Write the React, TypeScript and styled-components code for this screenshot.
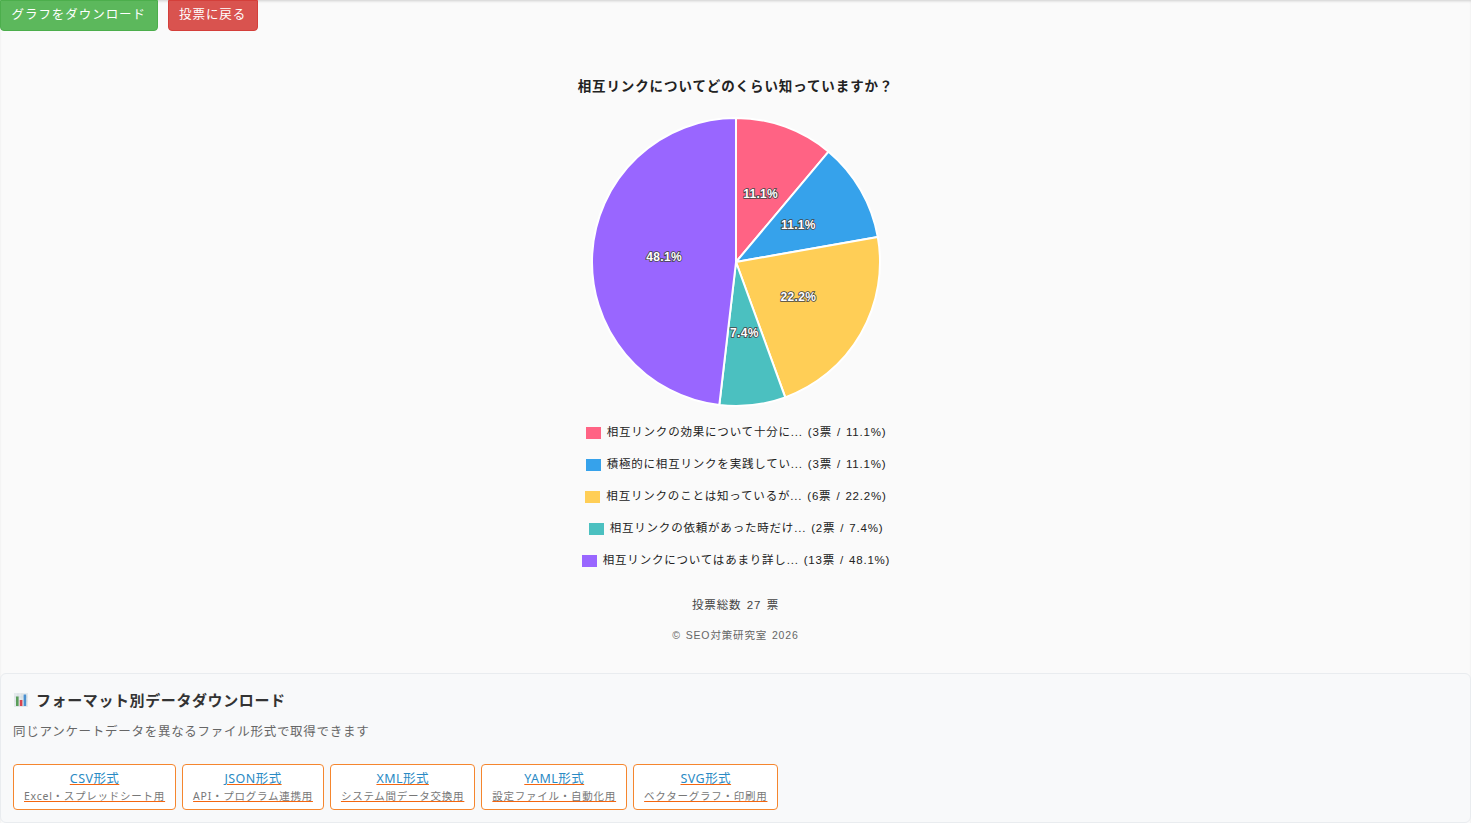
import React from "react";
import styled, { createGlobalStyle } from "styled-components";

const GlobalStyle = createGlobalStyle`
  html, body {
    margin: 0;
    padding: 0;
    background: #fafafa;
    font-family: "Liberation Sans", "Noto Sans CJK JP", sans-serif;
  }
`;

const slices = [
  { label: "相互リンクの効果について十分に...", votes: 3, pct: "11.1%", color: "#ff6384" },
  { label: "積極的に相互リンクを実践してい...", votes: 3, pct: "11.1%", color: "#36a2eb" },
  { label: "相互リンクのことは知っているが...", votes: 6, pct: "22.2%", color: "#ffce56" },
  { label: "相互リンクの依頼があった時だけ...", votes: 2, pct: "7.4%", color: "#4bc0c0" },
  { label: "相互リンクについてはあまり詳し...", votes: 13, pct: "48.1%", color: "#9966ff" },
];

const formats = [
  { name: "CSV形式", note: "Excel・スプレッドシート用" },
  { name: "JSON形式", note: "API・プログラム連携用" },
  { name: "XML形式", note: "システム間データ交換用" },
  { name: "YAML形式", note: "設定ファイル・自動化用" },
  { name: "SVG形式", note: "ベクターグラフ・印刷用" },
];

const Pie = () => {
  const c = 146;
  const r = 144;
  const total = 27;
  let acc = 0;
  const parts = slices.map((s) => {
    const a0 = (acc / total) * Math.PI * 2;
    acc += s.votes;
    const a1 = (acc / total) * Math.PI * 2;
    const mid = (a0 + a1) / 2;
    const large = a1 - a0 > Math.PI ? 1 : 0;
    const d = `M${c} ${c}L${c + r * Math.sin(a0)} ${c - r * Math.cos(a0)}A${r} ${r} 0 ${large} 1 ${c + r * Math.sin(a1)} ${c - r * Math.cos(a1)}Z`;
    return { ...s, d, x: c + 0.5 * r * Math.sin(mid), y: c - 0.5 * r * Math.cos(mid) };
  });
  return (
    <PieSvg width={292} height={292} viewBox="0 0 292 292">
      {parts.map((p) => (
        <path key={p.color} d={p.d} fill={p.color} stroke="#fff" strokeWidth={2} strokeLinejoin="round" />
      ))}
      {parts.map((p) => (
        <PieLabel key={p.color} x={p.x} y={p.y} textAnchor="middle" dominantBaseline="middle">
          {p.pct}
        </PieLabel>
      ))}
    </PieSvg>
  );
};

const ChartIcon = () => (
  <svg width="16" height="16" viewBox="0 0 16 16">
    <rect x="1" y="1" width="14" height="14" fill="#e4e9ec" />
    <path d="M1.5 5h13M1.5 9h13M5 1.5v13M9 1.5v13" stroke="#cfd8dc" strokeWidth="0.6" />
    <rect x="3" y="4.5" width="2.6" height="9.5" fill="#5a9e5a" />
    <rect x="6.8" y="8" width="2.6" height="6" fill="#d9434e" />
    <rect x="10.6" y="2.5" width="2.6" height="11.5" fill="#4a90d0" />
  </svg>
);

const App = () => (
  <>
    <GlobalStyle />
    <Page>
      <Actions>
        <ActionButton $bg="#5cb85c" $border="#4cae4c">グラフをダウンロード</ActionButton>
        <ActionButton $bg="#d9534f" $border="#d43f3a">投票に戻る</ActionButton>
      </Actions>
      <ChartArea>
        <ChartTitle>相互リンクについてどのくらい知っていますか？</ChartTitle>
        <Pie />
        <Legend>
          {slices.map((s) => (
            <LegendRow key={s.color}>
              <Swatch $color={s.color} />
              <LegendText>{s.label} ({s.votes}票 / {s.pct})</LegendText>
            </LegendRow>
          ))}
        </Legend>
        <Total>投票総数 27 票</Total>
        <Copy>© SEO対策研究室 2026</Copy>
      </ChartArea>
      <Panel>
        <PanelTitle><ChartIcon />フォーマット別データダウンロード</PanelTitle>
        <PanelText>同じアンケートデータを異なるファイル形式で取得できます</PanelText>
        <FormatRow>
          {formats.map((f) => (
            <FormatLink key={f.name} href="#">
              <FormatName>{f.name}</FormatName>
              <FormatNote>{f.note}</FormatNote>
            </FormatLink>
          ))}
        </FormatRow>
      </Panel>
    </Page>
  </>
);

export default App;

const Page = styled.div`
  min-height: 823px;
  box-shadow: inset 0 2px 3px -1px rgba(0, 0, 0, 0.18);
`;

const Actions = styled.div`
  display: flex;
  gap: 10px;
`;

const ActionButton = styled.button<{ $bg: string; $border: string }>`
  height: 31px;
  padding: 0 10.5px 4px;
  border: 1px solid ${({ $border }) => $border};
  border-radius: 0 0 4px 4px;
  background: ${({ $bg }) => $bg};
  color: #fff;
  font: 12.5px "Noto Sans", "Noto Sans CJK JP", sans-serif;
  letter-spacing: 0.95px;
`;

const ChartArea = styled.div`
  display: flex;
  flex-direction: column;
  align-items: center;
`;

const ChartTitle = styled.h2`
  margin: 46px 0 0;
  height: 20px;
  font: bold 13.5px/20px "Liberation Sans", "Noto Sans CJK JP", sans-serif;
  letter-spacing: 0.9px;
  color: #222;
`;

const PieSvg = styled.svg`
  display: block;
  margin-top: 19px;
`;

const PieLabel = styled.text`
  font: bold 12px "Liberation Sans", sans-serif;
  letter-spacing: 0.3px;
  fill: #fff;
  stroke: #444;
  stroke-width: 1.6px;
  paint-order: stroke;
`;

const Legend = styled.div`
  display: flex;
  flex-direction: column;
  align-items: center;
  margin-top: 8px;
  padding-left: 1px;
`;

const LegendRow = styled.div`
  display: flex;
  align-items: center;
  gap: 6px;
  height: 32px;
`;

const LegendText = styled.span`
  padding-bottom: 2px;
  font-size: 11.5px;
  letter-spacing: 0.8px;
  word-spacing: 1px;
  color: #222;
`;

const Swatch = styled.i<{ $color: string }>`
  display: block;
  width: 15px;
  height: 12px;
  margin-top: 2px;
  background: ${({ $color }) => $color};
`;

const Total = styled.div`
  margin-top: 20px;
  font-size: 11.5px;
  line-height: 18px;
  letter-spacing: 0.8px;
  word-spacing: 1.5px;
  color: #444;
`;

const Copy = styled.div`
  margin-top: 13px;
  font-size: 10.5px;
  line-height: 16px;
  letter-spacing: 0.85px;
  word-spacing: 1px;
  color: #666;
`;

const Panel = styled.section`
  box-sizing: border-box;
  height: 150px;
  margin-top: 30px;
  padding: 16px 12px 0;
  background: #f8f9fa;
  border: 1px solid #e9ecef;
  border-radius: 6px;
`;

const PanelTitle = styled.h3`
  display: flex;
  align-items: center;
  gap: 7px;
  margin: 0;
  font: bold 15px/20px "Noto Sans", "Noto Sans CJK JP", sans-serif;
  letter-spacing: 0.6px;
  color: #333;
`;

const PanelText = styled.p`
  margin: 12px 0 0;
  font: 12.5px/20px "Noto Sans", "Noto Sans CJK JP", sans-serif;
  letter-spacing: 0.72px;
  color: #666;
`;

const FormatRow = styled.div`
  display: flex;
  gap: 6px;
  margin-top: 22px;
`;

const FormatLink = styled.a`
  box-sizing: border-box;
  height: 46px;
  padding: 6px 10px;
  background: #fff;
  border: 1px solid #f5862e;
  border-radius: 4px;
  text-align: center;
  color: #f4660f;
  text-decoration: underline;
  font-family: "Noto Sans", "Noto Sans CJK JP", sans-serif;
`;

const FormatName = styled.span`
  display: block;
  font-size: 12.5px;
  line-height: 16.5px;
  letter-spacing: 0.45px;
  color: #2a8ac4;
`;

const FormatNote = styled.span`
  display: block;
  font-size: 10.5px;
  line-height: 16.5px;
  letter-spacing: 0.75px;
  color: #777;
`;
